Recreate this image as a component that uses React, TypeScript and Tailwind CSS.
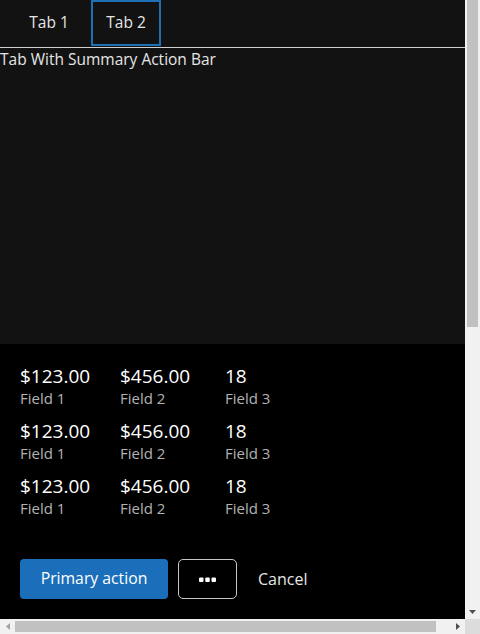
import { useState } from "react";

const rows = [0, 1, 2];

function SummaryItem({ value, label, w }: { value: string; label: string; w: string }) {
  return (
    <div className={`flex flex-col ${w}`}>
      <span className="text-[19px] leading-[24px] text-white">{value}</span>
      <span className="text-[15px] leading-[20px] text-[#b3b3b3]">{label}</span>
    </div>
  );
}

// classic scrollbar look from the reference shot
function VScroll() {
  return (
    <div className="flex flex-col bg-[#f1f1f1]">
      <div className="mx-[2px] h-[327px] bg-[#c1c1c1]" />
      <div className="flex-1" />
      <div className="flex h-[15px] items-center justify-center">
        <svg width="7" height="4" viewBox="0 0 7 4" fill="#505050">
          <polygon points="0,0 7,0 3.5,4" />
        </svg>
      </div>
    </div>
  );
}

function HScroll() {
  return (
    <div className="flex items-center bg-[#f1f1f1]">
      <div className="flex h-[15px] w-[15px] items-center justify-center">
        <svg width="4" height="7" viewBox="0 0 4 7" fill="#a3a3a3">
          <polygon points="4,0 4,7 0,3.5" />
        </svg>
      </div>
      <div className="h-[11px] w-[421px] bg-[#c1c1c1]" />
      <div className="flex-1" />
      <div className="flex h-[15px] w-[15px] items-center justify-center">
        <svg width="4" height="7" viewBox="0 0 4 7" fill="#505050">
          <polygon points="0,0 4,3.5 0,7" />
        </svg>
      </div>
    </div>
  );
}

export default function App() {
  const [tab, setTab] = useState(2);

  return (
    <div className="grid h-[634px] w-[480px] grid-cols-[465px_15px] grid-rows-[619px_15px] overflow-hidden bg-black font-['Open_Sans',sans-serif]">
      <div className="overflow-hidden">
        {/* tab strip */}
        <div className="flex h-[48px] gap-[7px] border-b border-[#d0d0d0] bg-[#121212] pl-[14px]">
          <button
            onClick={() => setTab(1)}
            className={`h-[46px] w-[70px] text-[15.5px] text-[#e6e6e6] ${tab === 1 ? "border-2 border-[#1f6fb5]" : ""}`}
          >
            Tab 1
          </button>
          <button
            onClick={() => setTab(2)}
            className={`h-[46px] w-[70px] text-[15.5px] text-[#e6e6e6] ${tab === 2 ? "border-2 border-[#1f6fb5]" : ""}`}
          >
            Tab 2
          </button>
        </div>

        <div className="h-[296px] bg-[#121212] pt-[1px] text-[15.5px] leading-[20px] text-[#e6e6e6]">
          Tab With Summary Action Bar
        </div>

        {/* summary action bar */}
        <div className="flex flex-col bg-black px-[20px] pt-[20px]">
          <div className="flex flex-col gap-[11px]">
            {rows.map((r) => (
              <div key={r} className="flex">
                <SummaryItem value="$123.00" label="Field 1" w="w-[100px]" />
                <SummaryItem value="$456.00" label="Field 2" w="w-[105px]" />
                <SummaryItem value="18" label="Field 3" w="w-[80px]" />
              </div>
            ))}
          </div>

          <div className="mt-[41px] flex items-center">
            <button className="h-[40px] w-[148px] rounded-[4px] bg-[#1b6fba] text-[15.75px] text-white">
              Primary action
            </button>
            <button className="ml-[10px] flex h-[40px] w-[59px] items-center justify-center rounded-[5px] border border-[#c8c8c8]">
              <svg width="17" height="5" viewBox="0 0 17 5" fill="white">
                <rect x="0" y="0.5" width="4.5" height="4.5" rx="1" />
                <rect x="6.25" y="0.5" width="4.5" height="4.5" rx="1" />
                <rect x="12.5" y="0.5" width="4.5" height="4.5" rx="1" />
              </svg>
            </button>
            <button className="ml-[21px] h-[40px] text-[16px] text-[#e6e6e6]">Cancel</button>
          </div>
        </div>
      </div>
      <VScroll />
      <HScroll />
      <div className="bg-[#dcdcdc]" />
    </div>
  );
}
